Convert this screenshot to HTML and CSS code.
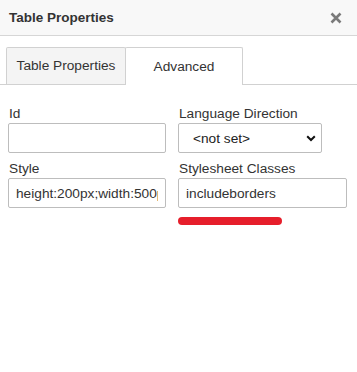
FILE: index.html
```html
<!DOCTYPE html>
<html>
<head>
<meta charset="utf-8">
<link rel="stylesheet" href="styles.css">
</head>
<body>
<div class="dialog">
  <div class="header">
    <span class="title">Table Properties</span>
    <svg class="close" width="12" height="12" viewBox="0 0 12 12"><path d="M1.5 1.5 L10.5 10.5 M10.5 1.5 L1.5 10.5" stroke="#7a7a7a" stroke-width="2.6" stroke-linecap="butt"/></svg>
  </div>
  <div class="tabs">
    <div class="tab tab-inactive">Table Properties</div>
    <div class="tab tab-active">Advanced</div>
  </div>
  <div class="form">
    <div class="field">
      <label class="label">Id</label>
      <input class="input" type="text" value="">
    </div>
    <div class="field">
      <label class="label">Language Direction</label>
      <div class="select-wrap">
        <select class="select"><option>&lt;not set&gt;</option></select>
        <svg class="chevron" width="10" height="7" viewBox="0 0 10 7"><path d="M1.2 1.2 L5 5 L8.8 1.2" fill="none" stroke="#111" stroke-width="2"/></svg>
      </div>
    </div>
    <div class="field">
      <label class="label">Style</label>
      <input class="input" type="text" value="height:200px;width:500px;">
    </div>
    <div class="field wide">
      <label class="label">Stylesheet Classes</label>
      <input class="input" type="text" value="includeborders">
      <div class="mark"></div>
    </div>
  </div>
</div>
</body>
</html>
```

FILE: styles.css
```css
* { box-sizing: border-box; }
html, body { margin: 0; padding: 0; background: #fff; }
body {
  font-family: "Liberation Sans", Arial, sans-serif;
  font-size: 13.6px;
  color: #333;
}
.dialog { width: 357px; height: 372px; }
.header {
  height: 36px;
  background: #f8f8f8;
  border-bottom: 1px solid #d6d6d6;
  display: flex;
  align-items: center;
  justify-content: space-between;
  padding: 0 15px 1px 9px;
}
.title { font-weight: bold; font-size: 13.5px; color: #333; }
.close { display: block; margin-top: 1px; }
.tabs {
  margin-top: 11px;
  display: flex;
  padding-left: 6px;
  height: 38px;
  border-bottom: 1px solid #d1d1d1;
}
.tab {
  height: 38px;
  border: 1px solid #d1d1d1;
  border-bottom: none;
  border-radius: 2px 2px 0 0;
  display: flex;
  align-items: center;
  justify-content: center;
  font-size: 13.7px;
  color: #333;
  padding-bottom: 1px;
}
.tab-inactive {
  width: 120px;
  background: #f4f4f4;
  height: 37px;
}
.tab-active {
  width: 118px;
  background: #fff;
  margin-left: -1px;
  margin-bottom: -1px;
  position: relative;
}
.form {
  display: grid;
  grid-template-columns: 158px 169px;
  column-gap: 12px;
  row-gap: 8px;
  padding: 21px 0 0 8px;
}
.field { display: flex; flex-direction: column; }
.label {
  display: block;
  height: 15px;
  line-height: 15px;
  margin-bottom: 2px;
  padding-left: 1px;
  font-size: 13.7px;
  color: #333;
}
.input {
  width: 158px;
  height: 30px;
  border: 1px solid #bdbdbd;
  border-radius: 2px;
  padding: 0 7px;
  font-family: "Liberation Sans", Arial, sans-serif;
  font-size: 13.7px;
  color: #333;
  background: #fff;
  outline: none;
}
.wide .input { width: 169px; }
.select-wrap { position: relative; width: 144px; height: 30px; }
.select {
  -webkit-appearance: none;
  appearance: none;
  width: 144px;
  height: 30px;
  border: 1px solid #bdbdbd;
  border-radius: 2px;
  padding: 0 0 0 14px;
  font-family: "Liberation Sans", Arial, sans-serif;
  font-size: 13.7px;
  color: #222;
  background: #fff;
}
.chevron { position: absolute; left: 128px; top: 12px; }
.mark {
  margin-top: 9px;
  width: 104px;
  height: 8px;
  border-radius: 4px;
  background: #e61e2b;
}
```
